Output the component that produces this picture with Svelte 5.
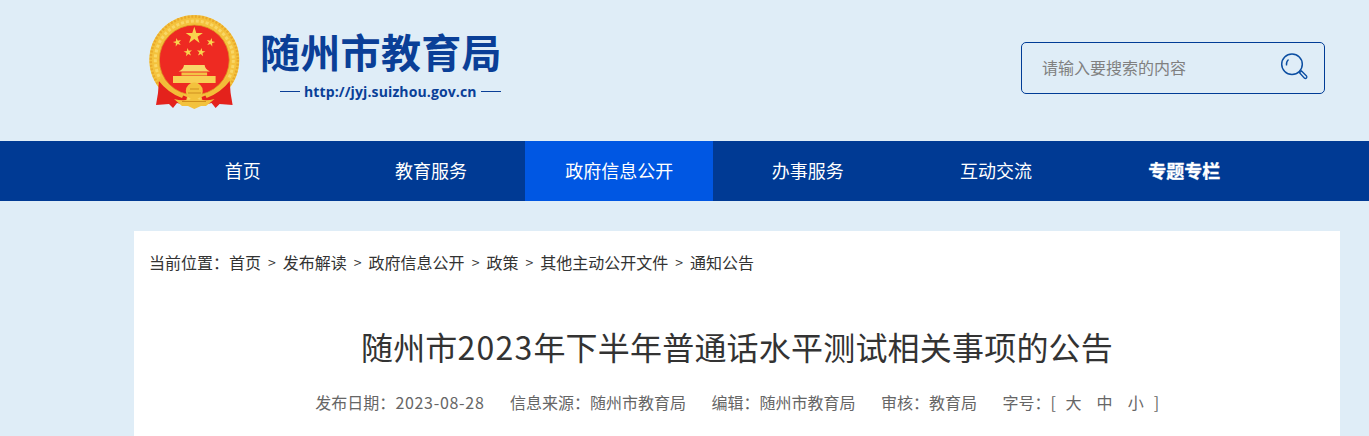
<script>
  const navItems = [
    { label: '首页' },
    { label: '教育服务' },
    { label: '政府信息公开', active: true },
    { label: '办事服务' },
    { label: '互动交流' },
    { label: '专题专栏', bold: true }
  ];
  const crumbs = ['首页', '发布解读', '政府信息公开', '政策', '其他主动公开文件', '通知公告'];
  const meta = ['信息来源：随州市教育局', '编辑：随州市教育局', '审核：教育局'];
  const smallStars = [
    [28.3, 27.3, -15],
    [61.7, 27.3, 15],
    [39, 37.3, -8],
    [52, 37.3, 8]
  ];

  function star(cx, cy, r, rot = 0) {
    const pts = [];
    for (let i = 0; i < 10; i++) {
      const rad = i % 2 ? r * 0.38 : r;
      const a = ((i * 36 - 90 + rot) * Math.PI) / 180;
      pts.push((cx + rad * Math.cos(a)).toFixed(2) + ',' + (cy + rad * Math.sin(a)).toFixed(2));
    }
    return pts.join(' ');
  }
</script>

<div class="page">
  <header class="top">
    <svg class="emblem" viewBox="0 0 92 94" width="92" height="94" aria-hidden="true">
      <defs>
        <filter id="soft" x="-5%" y="-5%" width="110%" height="110%">
          <feGaussianBlur stdDeviation="0.4" />
        </filter>
      </defs>
      <g filter="url(#soft)">
        <circle cx="45.3" cy="45" r="45" fill="#f4c23e" />
        <circle cx="45.3" cy="45" r="43.5" fill="none" stroke="#e9a92a" stroke-width="2.4" stroke-dasharray="2 1.6" />
        <circle cx="45.3" cy="45" r="39" fill="none" stroke="#f9d765" stroke-width="3" stroke-dasharray="3 2" />
        <circle cx="45.3" cy="45" r="35" fill="#ee2c24" stroke="#dc9a22" stroke-width="0.8" />

        <path d="M10 65 L28 78 L38 82 L36 90 L28 88 L24 93 L20 89 L7 90 L9 78 Z" fill="#e4201d" />
        <path d="M80.6 65 L62.6 78 L52.6 82 L54.6 90 L62.6 88 L66.6 93 L70.6 89 L83.6 90 L81.6 78 Z" fill="#e4201d" />
        <path d="M13 62 Q22 76 35 79 L33 83 Q19 78 9 65 Z" fill="#f3bd38" />
        <path d="M77.6 62 Q68.6 76 55.6 79 L57.6 83 Q71.6 78 81.6 65 Z" fill="#f3bd38" />

        <polygon points={star(45.3, 20.7, 9)} fill="#f9d44e" />
        {#each smallStars as s}
          <polygon points={star(s[0], s[1], 4.4, s[2])} fill="#f9d44e" />
        {/each}

        <path d="M35 50 H55.6 Q56 54 61 56.5 H29.6 Q34.6 54 35 50 Z" fill="#f8d76a" />
        <rect x="32.5" y="57.5" width="25.6" height="3" fill="#f3c445" />
        <rect x="24" y="61" width="42.6" height="7" fill="#f8cf55" />

        <circle cx="45.3" cy="76" r="8.5" fill="#f3c23c" />
        <path d="M39 78 H52 M41 74 H50" stroke="#cf8f1e" stroke-width="1" fill="none" />
        <path d="M25 84 Q36 87 45.3 83 Q55 87 65.6 84 L57 91 H52 L45.3 94 L39 91 H33 Z" fill="#f3c23c" />
        <path d="M33 86.5 H57" stroke="#cf8f1e" stroke-width="1" fill="none" />
      </g>
    </svg>
    <div class="brand">
      <h1>随州市教育局</h1>
      <p class="url"><i></i><span>http://jyj.suizhou.gov.cn</span><i></i></p>
    </div>
    <div class="search">
      <span class="placeholder">请输入要搜索的内容</span>
      <svg class="search-icon" viewBox="0 0 30 30" width="30" height="30" aria-hidden="true">
        <circle cx="12" cy="11.3" r="10.3" fill="none" stroke="#0b4ea2" stroke-width="1.5" />
        <path d="M6.5 12.5 A6.5 6.5 0 0 1 8.5 6.5" fill="none" stroke="#0b4ea2" stroke-width="1.3" />
        <path d="M19.5 19.8 L21.5 18 L26.5 23 A1.5 1.5 0 0 1 24.5 25.2 Z" fill="none" stroke="#0b4ea2" stroke-width="1.3" />
      </svg>
    </div>
  </header>

  <nav class="nav">
    {#each navItems as item}
      <a href="#top" class:active={item.active} class:bold={item.bold}>{item.label}</a>
    {/each}
  </nav>

  <main class="card">
    <div class="crumbs">
      <span>当前位置：</span>
      {#each crumbs as c, i}
        {#if i > 0}<span class="sep">&gt;</span>{/if}
        <span>{c}</span>
      {/each}
    </div>
    <h2>随州市<span class="num">2023</span>年下半年普通话水平测试相关事项的公告</h2>
    <div class="meta">
      <span>发布日期：<span class="date">2023-08-28</span></span>
      {#each meta as m}
        <span>{m}</span>
      {/each}
      <span class="size">字号：<b class="open">[</b><b>大</b><b>中</b><b>小</b><b class="close">]</b></span>
    </div>
  </main>
</div>

<style>
  :global(body) {
    margin: 0;
    background: #dfedf7;
  }

  .page {
    height: 436px;
    overflow: hidden;
    font-family: "Noto Sans CJK SC", "Noto Sans", sans-serif;
    color: #333;
  }

  .top {
    display: flex;
    align-items: flex-start;
    height: 141px;
    padding-left: 149px;
    box-sizing: border-box;
  }

  .emblem {
    margin-top: 15px;
    flex: none;
  }

  .brand {
    margin-left: 19px;
    margin-top: 23px;
    width: 241px;
  }

  h1 {
    margin: 0;
    font-size: 40px;
    line-height: 56px;
    font-weight: 700;
    letter-spacing: 0.3px;
    color: #0a3f97;
    white-space: nowrap;
  }

  .url {
    margin: 1px 0 0 20px;
    display: flex;
    align-items: center;
    gap: 4px;
    height: 22px;
    font-family: "Open Sans", "Liberation Sans", sans-serif;
    font-size: 14px;
    font-weight: 700;
    letter-spacing: 0.12px;
    color: #0a3f97;
    white-space: nowrap;
  }

  .url i {
    display: block;
    width: 20px;
    height: 1px;
    background: #0a3f97;
  }

  .search {
    margin-left: 520px;
    margin-top: 42px;
    width: 304px;
    height: 52px;
    box-sizing: border-box;
    border: 1px solid #003c96;
    border-radius: 5px;
    display: flex;
    align-items: center;
    justify-content: space-between;
    padding: 0 14px 0 20px;
  }

  .placeholder {
    font-size: 16px;
    margin-bottom: 2px;
    color: #808080;
  }

  .search-icon {
    flex: none;
  }

  .nav {
    display: grid;
    grid-template-columns: repeat(6, 188.33px);
    height: 60px;
    padding-left: 148.5px;
    background: #003a94;
  }

  .nav a {
    display: block;
    height: 60px;
    text-align: center;
    line-height: 58px;
    font-size: 18px;
    color: #fff;
    text-decoration: none;
  }

  .nav a.active {
    background: #0057e3;
  }

  .nav a.bold {
    font-weight: 700;
    -webkit-text-stroke: 0.3px #fff;
  }

  .card {
    margin: 30px 0 0 134px;
    width: 1206px;
    height: 300px;
    background: #fff;
    box-sizing: border-box;
    padding: 19px 15px 0;
  }

  .crumbs {
    display: flex;
    align-items: center;
    height: 24px;
    font-size: 16px;
    color: #333;
    white-space: nowrap;
  }

  .sep {
    margin: 0 7px;
    font-size: 14px;
  }

  h2 {
    margin: 50px 0 0;
    font-size: 32px;
    line-height: 44px;
    font-weight: 400;
    letter-spacing: 0.2px;
    text-align: center;
    color: #333;
  }

  .num {
    letter-spacing: 1.2px;
  }

  .meta {
    margin-top: 22px;
    display: flex;
    justify-content: center;
    gap: 25.5px;
    font-size: 16px;
    line-height: 24px;
    color: #666;
    white-space: nowrap;
  }

  .date {
    letter-spacing: 0.7px;
  }

  .size {
    display: flex;
  }

  .size b {
    font-weight: 400;
    margin-right: 15px;
  }

  .size b.open {
    width: 15px;
    margin-right: 0;
  }

  .size b:nth-last-child(2) {
    margin-right: 10px;
  }

  .size b.close {
    width: 5px;
    margin-right: 0;
  }
</style>
